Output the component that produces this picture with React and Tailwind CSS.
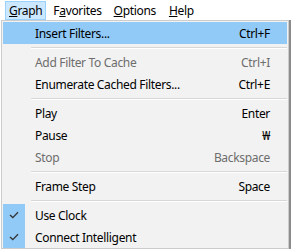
import React from "react";

const font = { fontFamily: '"Noto Sans", "Segoe UI", sans-serif' };

function Check() {
  return (
    <svg width="10" height="8" viewBox="0 0 10 8" className="block">
      <path d="M1 4 L3.8 6.6 L9 1.2" fill="none" stroke="#333" strokeWidth="1.3" />
    </svg>
  );
}

function Item({ label, shortcut, disabled, highlight, checked }) {
  return (
    <div className={`flex h-[22px] items-center ${highlight ? "bg-[#91c9f7]" : ""}`}>
      <div className={`w-[22px] h-full flex items-center justify-center ${checked ? "bg-[#91c9f7]" : ""}`}>
        {checked ? <Check /> : null}
      </div>
      <div className={`flex-1 flex items-center pt-[1px] pl-[10px] pr-[17px] ${disabled ? "text-[#6d6d6d]" : "text-black"}`}>
        <span className="flex-1">{label}</span>
        <span>{shortcut}</span>
      </div>
    </div>
  );
}

function Sep() {
  return (
    <div className="h-[7px] flex flex-col justify-center pl-[28px]">
      <div className="h-[1px] bg-[#d7d7d7]" />
      <div className="h-[1px] bg-white" />
    </div>
  );
}

export default function App() {
  return (
    <div className="w-[291px] h-[249px] bg-white overflow-hidden text-[12px] leading-none tracking-[-0.33px]" style={font}>
      <div className="flex h-[20px] pl-[5px] pt-[1px] items-stretch">
        <div className="px-[2px] border border-[#99d1ff] bg-[#cce8ff] flex items-center"><span className="px-[1px]"><u>G</u>raph</span></div>
        <div className="pl-[7px] pr-[6px] flex items-center">F<u>a</u>vorites</div>
        <div className="pl-[6px] pr-[7px] flex items-center"><u>O</u>ptions</div>
        <div className="px-[6px] flex items-center"><u>H</u>elp</div>
      </div>
      <div className="flex">
        <div className="ml-[1px] w-[288px] h-[229px] border border-[#cccccc] bg-[#f2f2f2] p-[1px]">
          <Item label="Insert Filters..." shortcut="Ctrl+F" highlight />
          <Sep />
          <Item label="Add Filter To Cache" shortcut="Ctrl+I" disabled />
          <Item label="Enumerate Cached Filters..." shortcut="Ctrl+E" />
          <Sep />
          <Item label="Play" shortcut="Enter" />
          <Item label="Pause" shortcut="₩" />
          <Item label="Stop" shortcut="Backspace" disabled />
          <Sep />
          <Item label="Frame Step" shortcut="Space" />
          <Sep />
          <Item label="Use Clock" checked />
          <Item label="Connect Intelligent" checked />
        </div>
        <div className="w-[2px] bg-[#8c8c8c]" />
      </div>
    </div>
  );
}
